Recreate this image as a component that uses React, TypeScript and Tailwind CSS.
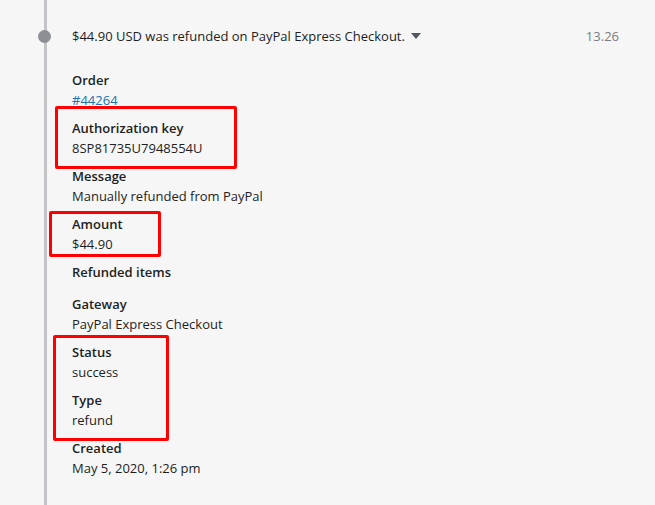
import React from "react";

const rows: { label: string; value?: string; link?: boolean }[] = [
  { label: "Order", value: "#44264", link: true },
  { label: "Authorization key", value: "8SP81735U7948554U" },
  { label: "Message", value: "Manually refunded from PayPal" },
  { label: "Amount", value: "$44.90" },
  { label: "Refunded items" },
  { label: "Gateway", value: "PayPal Express Checkout" },
  { label: "Status", value: "success" },
  { label: "Type", value: "refund" },
  { label: "Created", value: "May 5, 2020, 1:26 pm" },
];

export default function App() {
  return (
    <div
      className="relative flex w-[655px] h-[505px] overflow-hidden bg-[#f6f6f6] text-[13px] text-[#1e1e1e]"
      style={{ fontFamily: '"Open Sans", "Noto Sans", sans-serif' }}
    >
      {/* timeline column */}
      <div className="relative w-[72px] shrink-0 flex pl-[44px]">
        <div className="w-[3px] h-full bg-[#c3c4c7]" />
        <div className="absolute left-[38px] top-[30px] w-[13px] h-[13px] rounded-full bg-[#8c8f94]" />
      </div>

      <div className="flex-1 pr-[36px] pt-[26px] flex flex-col">
        <div className="flex items-center h-[20px] leading-[20px]">
          <span>$44.90 USD was refunded on PayPal Express Checkout.</span>
          <svg width="10" height="6" viewBox="0 0 10 6" className="ml-[6px]">
            <path d="M0 0 L10 0 L5 6 Z" fill="#50575e" />
          </svg>
          <span className="ml-auto text-[#787c82]">13.26</span>
        </div>

        <div className="mt-[24px] flex flex-col">
          {rows.map((r) => (
            <div key={r.label} className={r.value ? "mb-[8px]" : "mb-[12px]"}>
              <div className="font-semibold leading-[20px] h-[20px]">{r.label}</div>
              {r.value &&
                (r.link ? (
                  <div className="leading-[20px] h-[20px]">
                    <a className="text-[#2271b1] underline">{r.value}</a>
                  </div>
                ) : (
                  <div className="leading-[20px] h-[20px]">{r.value}</div>
                ))}
            </div>
          ))}
        </div>
      </div>

      {/* red annotation boxes drawn over the screenshot */}
      <div className="absolute left-[55px] top-[106px] w-[182px] h-[63px] border-[3px] border-[#ff0000] rounded-[2px]" />
      <div className="absolute left-[49px] top-[211px] w-[112px] h-[46px] border-[3px] border-[#ff0000] rounded-[2px]" />
      <div className="absolute left-[53px] top-[335px] w-[116px] h-[106px] border-[3px] border-[#ff0000] rounded-[2px]" />
    </div>
  );
}
